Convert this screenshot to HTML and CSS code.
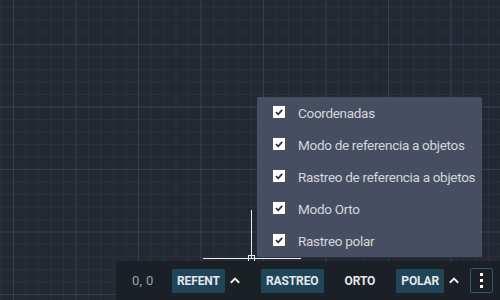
FILE: index.html
```html
<!DOCTYPE html>
<html lang="es">
<head>
    <meta charset="UTF-8">
    <title>Barra de estado</title>
    <link rel="stylesheet" href="styles.css">
</head>
<body>
    <div class="canvas">
        <div class="cursor">
            <div class="cursor-v"></div>
            <div class="cursor-h"></div>
            <div class="pickbox"></div>
        </div>

        <div class="status-menu">
            <label class="menu-item"><span class="check"><svg viewBox="0 0 12 12"><path d="M3 6.2 L5.2 8.3 L9.2 3.8"/></svg></span>Coordenadas</label>
            <label class="menu-item"><span class="check"><svg viewBox="0 0 12 12"><path d="M3 6.2 L5.2 8.3 L9.2 3.8"/></svg></span>Modo de referencia a objetos</label>
            <label class="menu-item"><span class="check"><svg viewBox="0 0 12 12"><path d="M3 6.2 L5.2 8.3 L9.2 3.8"/></svg></span>Rastreo de referencia a objetos</label>
            <label class="menu-item"><span class="check"><svg viewBox="0 0 12 12"><path d="M3 6.2 L5.2 8.3 L9.2 3.8"/></svg></span>Modo Orto</label>
            <label class="menu-item"><span class="check"><svg viewBox="0 0 12 12"><path d="M3 6.2 L5.2 8.3 L9.2 3.8"/></svg></span>Rastreo polar</label>
        </div>

        <div class="status-bar">
            <span class="coords">0, 0</span>
            <span class="toggle on">REFENT</span>
            <span class="caret"><svg viewBox="0 0 10 10"><path d="M1.5 6.5 L5 3 L8.5 6.5"/></svg></span>
            <span class="toggle on">RASTREO</span>
            <span class="toggle">ORTO</span>
            <span class="toggle on">POLAR</span>
            <span class="caret end"><svg viewBox="0 0 10 10"><path d="M1.5 6.5 L5 3 L8.5 6.5"/></svg></span>
            <button class="more"><i></i><i></i><i></i></button>
        </div>
    </div>
</body>
</html>
```

FILE: styles.css
```css
body { margin: 0; background: #222831; font-family: Roboto, "Noto Sans", sans-serif; }

.canvas {
    position: relative;
    width: 500px;
    height: 300px;
    overflow: hidden;
    background-color: #222932;
    background-image:
        linear-gradient(to right, #363d4e 1px, transparent 1px),
        linear-gradient(to bottom, #363d4e 1px, transparent 1px),
        linear-gradient(to right, #2a313c 1px, transparent 1px),
        linear-gradient(to bottom, #2a313c 1px, transparent 1px);
    background-size: 62.5px 62.5px, 62.5px 62.5px, 12.5px 12.5px, 12.5px 12.5px;
    background-position: 13px 0, 0 44px, 0.5px 0, 0 6.5px;
}

/* crosshair cursor */
.cursor { position: absolute; left: 203px; top: 210px; width: 98px; height: 52px; }
.cursor-v { position: absolute; left: 48px; top: 0; width: 1px; height: 48px; background: #e8eaee; }
.cursor-h { position: absolute; left: 0; top: 48px; width: 98px; height: 1px; background: #e8eaee; }
.pickbox { position: absolute; left: 45px; top: 45px; width: 5px; height: 5px; border: 1px solid #e8eaee; }

/* popup menu */
.status-menu {
    position: absolute;
    left: 257px;
    top: 97px;
    width: 225px;
    height: 160px;
    box-sizing: border-box;
    padding: 0 0 0 16px;
    background: #474e61;
    border-radius: 2px;
    display: flex;
    flex-direction: column;
}
.menu-item {
    display: flex;
    align-items: center;
    gap: 13px;
    height: 32px;
    color: #d3d6dd;
    font-size: 13.5px;
    letter-spacing: -0.3px;
}
.check {
    width: 12px;
    height: 12px;
    background: #fff;
    display: flex;
    margin-top: -2px;
}
.check svg { width: 12px; height: 12px; fill: none; stroke: #2c3240; stroke-width: 1.8; }

/* status bar */
.status-bar {
    position: absolute;
    left: 116px;
    top: 261px;
    right: 0;
    bottom: 0;
    background: #1b1f26;
    display: flex;
    align-items: center;
    padding: 0 7px 0 16px;
    font-size: 12px;
}
.status-bar > * { flex-shrink: 0; }
.coords { color: #9da1a9; font-size: 13px; width: 40px; letter-spacing: 0.3px; }
.toggle {
    height: 24px;
    line-height: 24px;
    padding: 0 5px;
    color: #e4e7ec;
    font-weight: bold;
    letter-spacing: -0.1px;
    margin-right: 16px;
    border-radius: 1px;
}
.toggle.on { background: #1f4557; }
.caret { width: 12px; height: 12px; display: flex; margin: 0 20px 0 -12px; }
.caret.end { margin-right: 4px; }
.caret svg { width: 12px; height: 12px; fill: none; stroke: #eef0f3; stroke-width: 1.6; }
.more {
    margin-left: auto;
    width: 23px;
    height: 25px;
    box-sizing: border-box;
    border: 1px solid #2b5a70;
    border-radius: 2px;
    background: transparent;
    padding: 0;
    display: flex;
    flex-direction: column;
    align-items: center;
    justify-content: center;
    gap: 3px;
}
.more i { display: block; width: 3px; height: 3px; background: #fff; }
```
